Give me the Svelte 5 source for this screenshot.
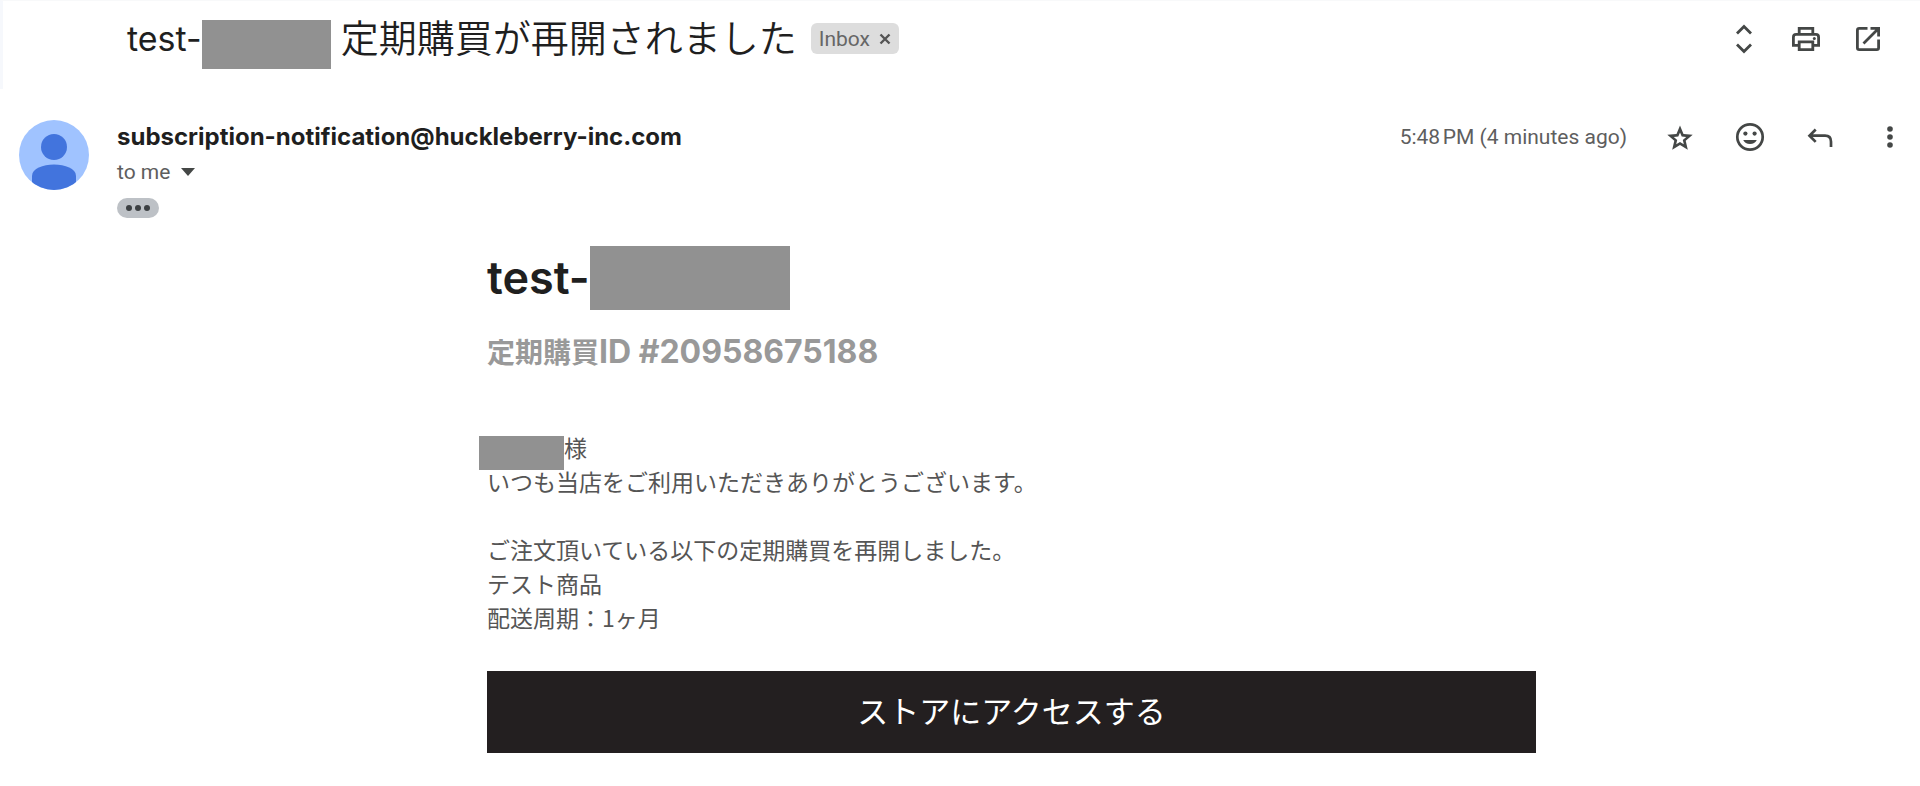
<script>
  const subscriptionId = '#20958675188';
</script>

<main>
  <header class="subject-bar">
    <h1>
      <span class="latin">test-</span>
      <span class="mask subject-mask"></span>
      <span class="subject-text">定期購買が再開されました</span>
    </h1>
    <div class="chip">
      <span>Inbox</span>
      <button type="button" aria-label="Remove label Inbox">
        <svg width="12" height="12" viewBox="0 0 12 12"><path d="M1.5 1.5l9 9M10.5 1.5l-9 9" fill="none" stroke="#555" stroke-width="2.4" /></svg>
      </button>
    </div>
    <div class="tools">
      <button type="button" aria-label="Expand all">
        <svg width="34" height="34" viewBox="0 0 34 34"><path d="M10 11.5l7-7 7 7M10 22.5l7 7 7-7" fill="none" stroke="#444746" stroke-width="2.8" /></svg>
      </button>
      <button type="button" aria-label="Print all">
        <svg width="34" height="34" viewBox="0 0 34 34">
          <g fill="none" stroke="#444746" stroke-width="2.8">
            <path d="M10.2 12V6.4h13.6V12" />
            <path d="M10 23.4H4.4v-8.2q0-2.8 2.8-2.8h19.6q2.8 0 2.8 2.8v8.2H24" />
            <path d="M10.2 19.8h13.6v7.8H10.2z" />
          </g>
          <circle cx="25.3" cy="16.6" r="1.5" fill="#444746" />
        </svg>
      </button>
      <button type="button" aria-label="In new window">
        <svg width="34" height="34" viewBox="0 0 34 34">
          <path d="M16.5 6.4H8.2q-1.8 0-1.8 1.8v17.6q0 1.8 1.8 1.8h17.6q1.8 0 1.8-1.8V17.5M19.5 6.4h8.1v8.1M27 7L12.5 21.5" fill="none" stroke="#444746" stroke-width="2.8" />
        </svg>
      </button>
    </div>
  </header>

  <article>
    <div class="message-head">
      <svg class="avatar" width="70" height="72" viewBox="0 0 70 72" role="img" aria-label="Sender">
        <defs><clipPath id="avatar-clip"><circle cx="35" cy="36" r="35" /></clipPath></defs>
        <g clip-path="url(#avatar-clip)">
          <rect width="70" height="72" fill="#a0c3ff" />
          <circle cx="35" cy="28" r="13" fill="#4274dd" />
          <path d="M13 72V57C13 49.500 24 45.500 35 45.500S57 49.500 57 57V72z" fill="#4274dd" />
        </g>
      </svg>
      <div class="who">
        <h2>subscription-notification@huckleberry-inc.com</h2>
        <button type="button" class="recipient">
          <span>to me</span>
          <svg width="14" height="8" viewBox="0 0 14 8"><path d="M0 0h14L7 8z" fill="#444746" /></svg>
        </button>
        <button type="button" class="trimmed" aria-label="Show trimmed content">
          <svg width="24" height="6" viewBox="0 0 24 6" fill="#3c4043"><circle cx="3" cy="3" r="3" /><circle cx="12" cy="3" r="3" /><circle cx="21" cy="3" r="3" /></svg>
        </button>
      </div>
      <div class="meta">
        <time>5:48&#8239;PM (4 minutes ago)</time>
        <div class="actions">
          <button type="button" aria-label="Star">
            <svg width="34" height="34" viewBox="0 0 34 34"><path d="M17 5.500l3.500 8.400 9.200.8-7 6 2.100 9-7.800-4.800-7.800 4.800 2.100-9-7-6 9.200-.8zM17 12.400l-1.700 4.100-4.500.4 3.400 3-1 4.300 3.800-2.300 3.800 2.300-1-4.300 3.400-3-4.500-.4z" fill="#444746" fill-rule="evenodd" /></svg>
          </button>
          <button type="button" aria-label="Add reaction">
            <svg width="34" height="34" viewBox="0 0 34 34">
              <circle cx="17" cy="17" r="12.700" fill="none" stroke="#444746" stroke-width="2.700" />
              <circle cx="12.400" cy="13.600" r="2.100" fill="#444746" /><circle cx="21.600" cy="13.600" r="2.100" fill="#444746" />
              <path d="M10.200 20h13.600q-2 4-6.800 4t-6.800-4z" fill="#444746" />
            </svg>
          </button>
          <button type="button" aria-label="Reply">
            <svg width="34" height="34" viewBox="0 0 34 34"><path d="M12.700 9.500L6.500 15.700l6.200 6.200M6.500 15.700H22q6 0 6 6V27" fill="none" stroke="#444746" stroke-width="2.700" /></svg>
          </button>
          <button type="button" aria-label="More">
            <svg width="34" height="34" viewBox="0 0 34 34" fill="#444746"><circle cx="17" cy="9" r="2.800" /><circle cx="17" cy="17" r="2.800" /><circle cx="17" cy="25" r="2.800" /></svg>
          </button>
        </div>
      </div>
    </div>

    <div class="mail">
      <div class="column">
        <h3 class="shop"><span>test-</span><span class="mask shop-mask"></span></h3>
        <h4>定期購買<span class="number">ID {subscriptionId}</span></h4>
        <div class="greeting"><span class="mask name-mask"></span><span>様</span></div>
        <p>いつも当店をご利用いただきありがとうございます。</p>
        <p class="notice">ご注文頂いている以下の定期購買を再開しました。<br />テスト商品<br />配送周期：1ヶ月</p>
        <a class="store" href="#store">ストアにアクセスする</a>
      </div>
    </div>
  </article>
</main>

<style>
  :global(body) {
    margin: 0;
    background: #fff;
  }

  main {
    font-family: Roboto, 'Noto Sans CJK JP', sans-serif;
    color: #1f1f1f;
  }

  h1, h2, h3, h4, p {
    margin: 0;
  }

  button {
    display: flex;
    align-items: center;
    padding: 0;
    border: 0;
    background: none;
    color: inherit;
    font: inherit;
    cursor: pointer;
  }

  svg {
    display: block;
    flex: none;
  }

  .mask {
    flex: none;
    background: #919191;
  }

  .subject-bar {
    display: flex;
    align-items: flex-start;
    box-sizing: border-box;
    min-height: 89px;
    padding: 19px 35px 0 124px;
    border-top: 1px solid #f8f9fa;
    border-left: 3px solid #f6f8fc;
  }

  h1 {
    display: flex;
    align-items: flex-start;
    font-size: 38px;
    font-weight: 350;
    line-height: 38px;
    white-space: nowrap;
  }

  .latin {
    font-family: Inter, sans-serif;
    font-size: 34px;
    font-weight: 400;
  }

  .subject-mask {
    width: 129px;
    height: 49px;
    margin-right: 10px;
  }

  .chip {
    display: flex;
    align-items: center;
    gap: 9px;
    height: 31px;
    margin: 3px 0 0 14px;
    padding: 0 8px;
    border-radius: 6px;
    background: #ddd;
    color: #666;
    font-size: 21px;
  }

  .tools {
    display: flex;
    gap: 28px;
    margin: 2px 0 0 auto;
  }

  .message-head {
    display: flex;
    padding: 30px 13px 0 19px;
  }

  .who {
    flex: 1;
    min-width: 0;
    margin-left: 28px;
  }

  h2 {
    font-family: Inter, sans-serif;
    font-size: 24px;
    font-weight: 700;
    line-height: 36px;
  }

  .recipient {
    gap: 11px;
    color: #5e5e5e;
    font-size: 21px;
    line-height: 34px;
  }

  .trimmed {
    justify-content: center;
    width: 42px;
    height: 20px;
    margin-top: 9px;
    border-radius: 10px;
    background: #bdc1c6;
  }

  .meta {
    display: flex;
    align-items: center;
    gap: 36px;
    height: 36px;
    color: #5e5e5e;
    font-size: 21px;
    white-space: nowrap;
  }

  .actions {
    display: flex;
    gap: 36px;
  }

  .mail {
    padding: 28px 14px 32px 117px;
    font-family: Inter, 'Noto Sans CJK JP', sans-serif;
  }

  .column {
    max-width: 1049px;
    margin: 0 auto;
  }

  .shop {
    display: flex;
    align-items: center;
    font-size: 45px;
    font-weight: 600;
    line-height: 64px;
  }

  .shop-mask {
    width: 200px;
    height: 64px;
  }

  h4 {
    margin-top: 22px;
    color: #999;
    font-size: 28px;
    line-height: 40px;
  }

  .number {
    font-size: 32px;
    font-weight: 700;
  }

  .greeting, p {
    color: #555;
    font-family: 'Noto Sans CJK JP', sans-serif;
    font-size: 23px;
    line-height: 34px;
  }

  .greeting {
    display: flex;
    align-items: flex-start;
    height: 34px;
    margin: 57px 0 0 -8px;
  }

  .name-mask {
    width: 85px;
    height: 34px;
    margin-top: 6px;
  }

  .notice {
    margin-top: 34px;
  }

  .store {
    display: block;
    margin-top: 37px;
    padding-bottom: 4px;
    background: #231f20;
    color: #fff;
    font-family: 'Noto Sans CJK JP', sans-serif;
    font-size: 31px;
    line-height: 78px;
    text-align: center;
    text-decoration: none;
  }
</style>
